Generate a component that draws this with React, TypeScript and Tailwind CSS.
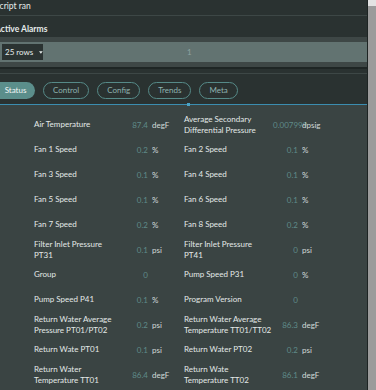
import React from "react";

type Cell = { label: string; value: string; unit?: string };

const rows: [Cell, Cell][] = [
  [
    { label: "Air Temperature", value: "87.4", unit: "degF" },
    { label: "Average Secondary Differential Pressure", value: "0.007999", unit: "dpsig" },
  ],
  [
    { label: "Fan 1 Speed", value: "0.2", unit: "%" },
    { label: "Fan 2 Speed", value: "0.1", unit: "%" },
  ],
  [
    { label: "Fan 3 Speed", value: "0.1", unit: "%" },
    { label: "Fan 4 Speed", value: "0.1", unit: "%" },
  ],
  [
    { label: "Fan 5 Speed", value: "0.1", unit: "%" },
    { label: "Fan 6 Speed", value: "0.1", unit: "%" },
  ],
  [
    { label: "Fan 7 Speed", value: "0.2", unit: "%" },
    { label: "Fan 8 Speed", value: "0.2", unit: "%" },
  ],
  [
    { label: "Filter Inlet Pressure PT31", value: "0.1", unit: "psi" },
    { label: "Filter Inlet Pressure PT41", value: "0", unit: "psi" },
  ],
  [
    { label: "Group", value: "0" },
    { label: "Pump Speed P31", value: "0", unit: "%" },
  ],
  [
    { label: "Pump Speed P41", value: "0.1", unit: "%" },
    { label: "Program Version", value: "0" },
  ],
  [
    { label: "Return Water Average Pressure PT01/PT02", value: "0.2", unit: "psi" },
    { label: "Return Water Average Temperature TT01/TT02", value: "86.3", unit: "degF" },
  ],
  [
    { label: "Return Wate PT01", value: "0.1", unit: "psi" },
    { label: "Return Water PT02", value: "0.2", unit: "psi" },
  ],
  [
    { label: "Return Water Temperature TT01", value: "86.4", unit: "degF" },
    { label: "Return Wate Temperature TT02", value: "86.1", unit: "degF" },
  ],
];

const tabs = ["Status", "Control", "Config", "Trends", "Meta"];

function StatCell({ cell }: { cell: Cell }) {
  return (
    <div className="flex h-[25px] items-center">
      <span className="w-[88px] shrink-0 leading-[11px] text-[#e3e9e8]">{cell.label}</span>
      <span className="ml-[1px] w-[25px] shrink-0 whitespace-nowrap text-right text-[#5f8b89]">{cell.value}</span>
      {cell.unit && <span className="ml-[4px] text-[#d2dad9]">{cell.unit}</span>}
    </div>
  );
}

export default function App() {
  return (
    <div className="flex h-[390px] w-[376px] overflow-hidden bg-[#2a3231] font-['Lato',sans-serif] text-[8px]">
      <div className="flex min-w-0 flex-1 flex-col border-r border-[#1d2423]">
        {/* header rows */}
        <div className="h-[16px] overflow-hidden border-b border-[#3d4746] pt-[1px] text-[8.5px] leading-[10px] text-[#e6eceb]">
          <span className="-ml-[5px]">Script ran</span>
        </div>
        <div className="flex h-[21px] items-end pb-[3px] text-[8.5px] font-bold leading-[10px] text-[#e6eceb]">
          <span className="-ml-[5px]">Active Alarms</span>
        </div>

        {/* alarms pager */}
        <div className="bg-[#3e4746] py-[5px]">
          <div className="relative flex h-[20px] items-center bg-[#627371] px-[2px]">
            <div className="flex h-[16px] w-[41px] items-center gap-[6px] bg-[#2b3332] pl-[3px] whitespace-nowrap text-[#e6eceb]">
              <span>25 rows</span>
              <svg width="5" height="3" viewBox="0 0 6 4">
                <path d="M0 0h6L3 4z" fill="#e6eceb" />
              </svg>
            </div>
            <span className="absolute left-[187px] text-[#8fa3a1]">1</span>
          </div>
        </div>
        <div className="h-[2px] bg-[#1f2625]" />
        <div className="h-[5px] border-b border-[#3d4746]" />

        {/* tabs */}
        <div className="flex h-[30px] items-center gap-[8px] pt-[2px]">
          {tabs.map((t, i) => (
            <div
              key={t}
              className={
                i === 0
                  ? "-ml-[8px] flex h-[17px] w-[43px] items-center justify-center rounded-full bg-[#5b8e8b] pl-[4px] text-[#f2f6f6]"
                  : "flex h-[17px] items-center rounded-full border border-[#568a88] px-[9px] text-[#8fb2b0]"
              }
            >
              {t}
            </div>
          ))}
        </div>
        <div className="relative h-[1px] bg-[#3b8db0]">
          <div className="absolute -top-[1px] left-[187px] h-[3px] w-[3px] bg-[#4aa3c6]" />
        </div>

        {/* status grid */}
        <div className="flex-1 bg-[#3a4443] pt-[7px] pl-[34px]">
          <div className="grid grid-cols-[150px_150px]">
            {rows.map(([a, b], i) => (
              <React.Fragment key={i}>
                <StatCell cell={a} />
                <StatCell cell={b} />
              </React.Fragment>
            ))}
          </div>
        </div>
      </div>

      {/* scrollbar */}
      <div className="flex w-[8px] shrink-0 justify-center bg-[#e3e3e3] pt-[6px]">
        <div className="w-[4px] flex-1 bg-[#9b9b9b]" />
      </div>
    </div>
  );
}
